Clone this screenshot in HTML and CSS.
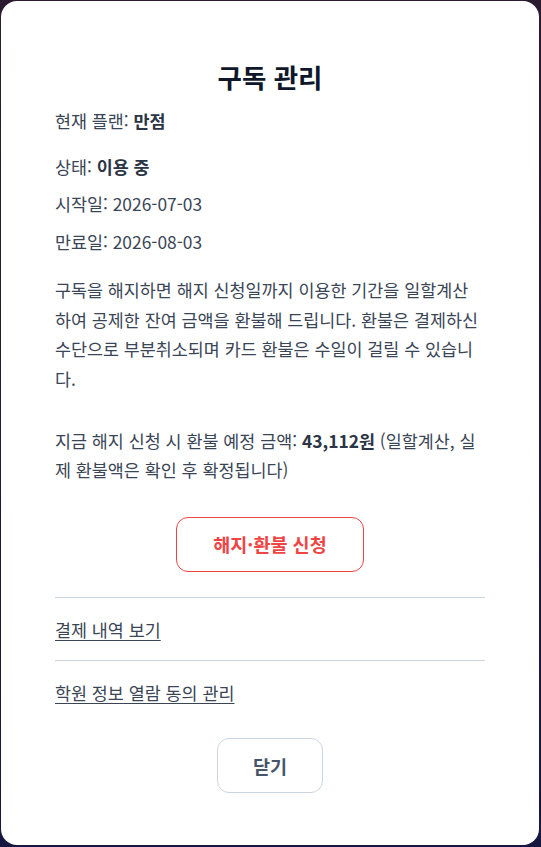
FILE: index.html
```html
<!DOCTYPE html>
<html lang="ko">
<head>
<meta charset="utf-8">
<title>구독 관리</title>
<link rel="stylesheet" href="styles.css">
</head>
<body>
<div class="overlay">
  <div class="modal">
    <h2 class="title">구독 관리</h2>
    <p class="row row-plan">현재 플랜: <strong>만점</strong></p>
    <p class="row">상태: <strong>이용 중</strong></p>
    <p class="row">시작일: 2026-07-03</p>
    <p class="row">만료일: 2026-08-03</p>
    <p class="desc">구독을 해지하면 해지 신청일까지 이용한 기간을 일할계산하여 공제한 잔여 금액을 환불해 드립니다. 환불은 결제하신 수단으로 부분취소되며 카드 환불은 수일이 걸릴 수 있습니다.</p>
    <p class="desc desc-refund">지금 해지 신청 시 환불 예정 금액: <strong>43,112원</strong> (일할계산, 실제 환불액은 확인 후 확정됩니다)</p>
    <div class="actions">
      <button class="btn btn-danger" type="button">해지·환불 신청</button>
    </div>
    <div class="links">
      <a class="link-row" href="#">결제 내역 보기</a>
      <a class="link-row" href="#">학원 정보 열람 동의 관리</a>
    </div>
    <div class="actions actions-close">
      <button class="btn btn-close" type="button">닫기</button>
    </div>
  </div>
</div>
</body>
</html>
```

FILE: styles.css
```css
* { box-sizing: border-box; }
html, body { margin: 0; height: 100%; }
body {
  font-family: "Noto Sans CJK KR", "Noto Sans", sans-serif;
  background: linear-gradient(180deg, #2b1b2f 0%, #221b38 50%, #16173f 100%);
}
.overlay {
  height: 100%;
  padding: 1px 2px 2px 1px;
  display: flex;
}
.modal {
  flex: 1;
  background: #ffffff;
  border-radius: 16px;
  padding: 60px 54px 52px 54px;
  color: #3a4556;
  font-size: 17.4px;
}
.title {
  margin: 0 0 15px;
  text-align: center;
  font-size: 26.5px;
  line-height: 32px;
  font-weight: 700;
  color: #0f172a;
}
.row {
  margin: 0 0 12px;
  line-height: 25.6px;
}
.row-plan { margin-bottom: 20px; }
.row strong, .desc strong { font-weight: 700; color: #2b3545; }
.desc {
  margin: 21px 0 0;
  max-width: 425px;
  line-height: 29.4px;
}
.desc-refund { margin-top: 33px; }
.actions {
  display: flex;
  justify-content: center;
  margin-top: 32px;
}
.btn {
  font-family: inherit;
  background: #ffffff;
  height: 55px;
  border-radius: 12px;
  font-size: 18.5px;
  font-weight: 700;
  cursor: pointer;
}
.btn-danger {
  width: 188px;
  border: 1px solid #ef4444;
  color: #ef4444;
}
.links {
  margin-top: 25px;
  display: flex;
  flex-direction: column;
}
.link-row {
  border-top: 1px solid #cbd5e1;
  padding: 19px 0 18px;
  line-height: 25.6px;
  color: #3a4556;
  text-decoration: underline;
  text-underline-offset: 3px;
}
.link-row + .link-row { padding-bottom: 0; }
.actions-close { margin-top: 32px; }
.btn-close {
  width: 106px;
  border: 1px solid #cbd5e1;
  color: #475569;
}
```
